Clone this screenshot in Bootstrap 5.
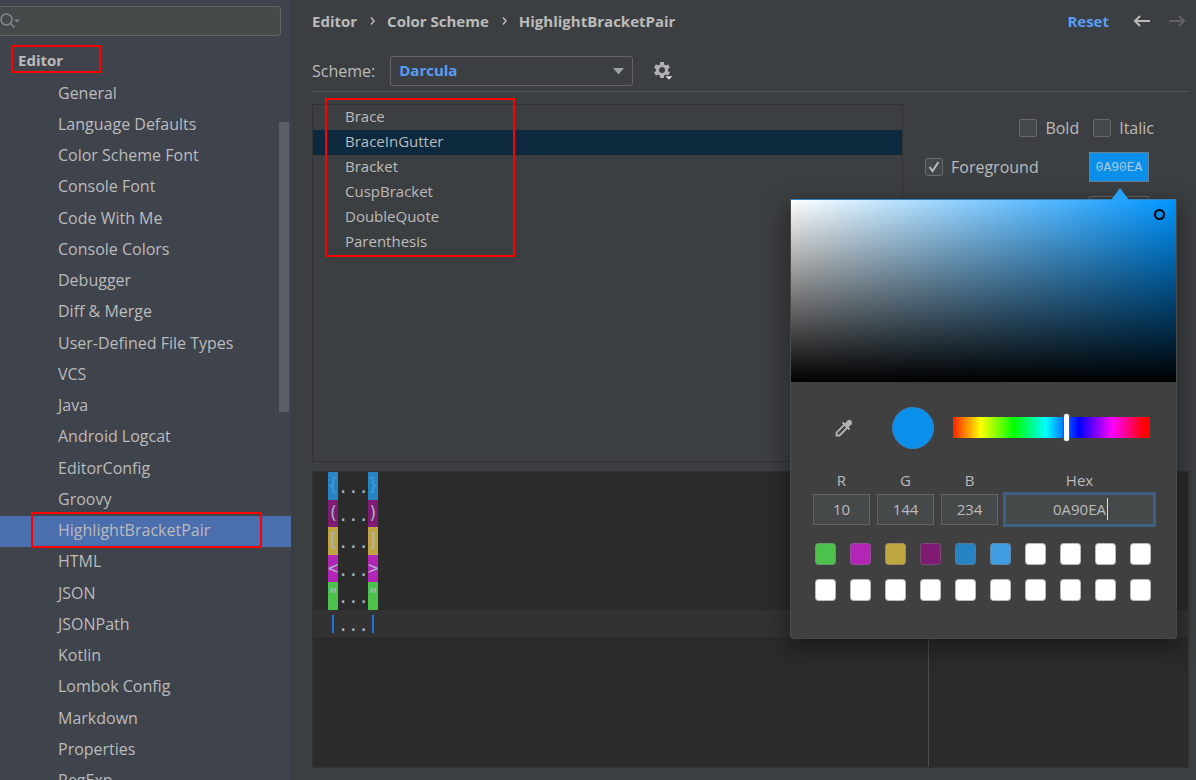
<!DOCTYPE html>
<html lang="en" data-bs-theme="dark">
<head>
<meta charset="utf-8">
<meta name="viewport" content="width=device-width, initial-scale=1">
<title>Settings</title>
<link href="https://cdn.jsdelivr.net/npm/bootstrap@5.3.0/dist/css/bootstrap.min.css" rel="stylesheet">
<style>
body{background:#3c3f41;color:#bbb;font:16px/24px "Open Sans","Noto Sans",sans-serif;height:100vh;overflow:hidden}
a{color:inherit;text-decoration:none}
svg{display:block}
/* settings tree */
.side{width:291px;background:#3f434c}
.search{margin-top:6px;width:281px;height:30px;background:#45494a;border:1px solid #646464;border-left:0;border-radius:0 4px 4px 0}
.search input{background:none;border:0;outline:0;color:#bbb;width:240px}
.group{margin:9px 0 6px 11px;width:90px;height:28px;line-height:26px;padding-left:5px;border:2px solid #f00;font-size:15px}
.tree li{height:31px;line-height:29px;position:relative}
.tree li:nth-child(4n){height:32px}
.tree a{display:block;height:31px;padding-left:58px}
.tree .on{background:#4b6eaf}
.thumb{position:absolute;left:279px;top:122px;width:10px;height:290px;background:#5b5e66}
.note{position:absolute;border:2px solid #f00;pointer-events:none}
.note-row{left:31px;top:-4px;width:231px;height:36px}
.note-list{left:12px;top:-7px;width:190px;height:159px}
/* header */
.main{padding:0 7px 12px 21px}
.crumbs{height:43px;padding-bottom:1px;font-size:15px}
.blue{color:#589df6}
.scheme{height:49px;border-bottom:1px solid #515456;padding:13px 0 5px}
.scheme select{width:243px;height:30px;background:none;border:1px solid #646464;border-radius:3px;color:#589df6;font-size:15px;font-weight:700;padding:0 0 2px 8px;appearance:none;line-height:24px}
.pick{position:relative;margin-left:15px}
.pick svg{position:absolute;right:9px;top:12px}
/* colour keys */
.keys{width:591px;height:358px;margin-top:12px;border:1px solid #323232;position:relative;font-size:15px}
.keys li{height:25px;line-height:22px;padding-left:32px}
.keys .on{background:#0d293e}
.attrs{padding:24px 0 0 22px}
.styles{padding-right:35px}
.styles label+.box{margin-left:14px}
.fg-row{margin-top:12px;padding-right:40px;height:30px}
.box{appearance:none;width:18px;height:18px;background:#43494a;border:1px solid #6b6b6b;border-radius:3px;margin:0}
.box:checked{background:#43494a url("data:image/svg+xml,%3Csvg xmlns='http://www.w3.org/2000/svg' viewBox='0 0 16 16'%3E%3Cpath d='M3.5 8l3 4 6-9' fill='none' stroke='%23bbb' stroke-width='2'/%3E%3C/svg%3E")}
.slot{height:30px}
.swatch{width:60px;height:30px;background:#0a90ea;border:1px solid #6b7f8e;color:#a9c8e0;font:13px/28px "Liberation Mono",monospace;padding:0;text-align:center;display:block}
.swatch-next{width:60px;height:20px;border:1px solid #646464;margin-top:14px}
/* sample */
.sample{margin-top:9px;background:#2b2b2b;border:1px solid #323232;position:relative;font:17px/34px "DejaVu Sans Mono",monospace;color:#a9b7c6}
.sample p{height:27px;line-height:26px;margin:0;padding-left:15px;display:flex}
.sample p:nth-child(odd){height:28px}
.sample span{width:30px;line-height:30px}
.sample b{width:10px;font-weight:400}
.sample .caret-row{background:#323232;height:27px}
.caret-row b{color:#0a90ea}
.c-brace{background:#2783c2;color:#409ce0}
.c-paren{background:#7f1b72}
.c-brack{background:#bfa642}
.c-cusp{background:#b225b7}
.c-quote{background:#4cc24c}
.margin-line{position:absolute;left:615px;top:0;bottom:0;width:1px;background:#4d4d4d}
/* colour chooser */
.popup{position:absolute;right:-28px;top:47px;width:387px;height:440px;background:#404040;border:1px solid #4a4a4a;border-top-color:#2e86c8;border-radius:0 0 4px 4px;box-shadow:0 8px 22px 4px rgba(0,0,0,.35);z-index:5}
.popup:before{content:"";position:absolute;left:320px;top:-12px;border:9px solid transparent;border-top:0;border-bottom:12px solid #25a0fb}
.field{height:182px;background:linear-gradient(to top,#000,transparent),linear-gradient(to right,#fff,#0095ff);position:relative}
.dot{position:absolute;right:11px;top:9px;width:11px;height:11px;border:2px solid #000;border-radius:50%}
.tools{padding:21px 26px 0 43px;height:70px}
.disc{width:42px;height:42px;border-radius:50%;background:#0a90ea;border:1px solid #2e86c8;margin-left:38px}
.hue{appearance:none;width:197px;height:21px;margin-left:19px;background:linear-gradient(to right,#f20,#ff0 14%,#0f0 31%,#0ff 47%,#00f 64%,#f0f 81%,#f00 97%)}
.hue::-webkit-slider-thumb{appearance:none;width:5px;height:27px;border-radius:2px;background:#fff;box-shadow:0 0 0 1px #555}
.nums{padding:16px 20px 0 22px;gap:7px;font-size:15px}
.nums label{display:flex;flex-direction:column;align-items:center;gap:2px;position:relative}
.nums label:last-child{margin-left:-2px}
.nums input{width:57px;height:31px;background:#45494a;border:1px solid #646464;color:#bbb;text-align:center;outline:0;padding:0 0 2px}
.nums .hex{width:153px;height:35px;margin:-2px 0;border:3px solid #3d6185}
.caret{position:absolute;left:104px;bottom:5px;width:1px;height:22px;background:#ddd}
.chips{padding:18px 25px 0 24px;display:grid;grid-template-columns:repeat(10,21px);justify-content:space-between;row-gap:14px}
.chips button{height:22px;border:1px solid rgba(120,120,120,.5);border-radius:4px;padding:0;background:#fff}
.chips .c-brace{background:#2783c2}
.chips .c-paren{background:#7f1b72}
.chips .c-brack{background:#bfa642}
.chips .c-cusp{background:#b225b7}
.chips .c-quote{background:#4cc24c}
.chips .c-sky{background:#409ce0}
</style>
</head>
<body class="d-flex">
<aside class="side position-relative overflow-hidden flex-shrink-0">
  <div class="search d-flex align-items-center">
    <svg width="20" height="18" viewBox="0 0 20 18" fill="none" stroke="#7d8b92" stroke-width="1.5"><circle cx="6.500" cy="7.500" r="5.500"/><path d="M10.500 11.500l4 4"/><path d="M14 7.500h6l-3 3z" fill="#7d8b92" stroke="none"/></svg>
    <input type="text" aria-label="Search settings">
  </div>
  <div class="group fw-bold">Editor</div>
  <ul class="tree list-unstyled m-0">
    <li><a href="#">General</a></li><li><a href="#">Language Defaults</a></li><li><a href="#">Color Scheme Font</a></li><li><a href="#">Console Font</a></li>
    <li><a href="#">Code With Me</a></li><li><a href="#">Console Colors</a></li><li><a href="#">Debugger</a></li><li><a href="#">Diff &amp; Merge</a></li>
    <li><a href="#">User-Defined File Types</a></li><li><a href="#">VCS</a></li><li><a href="#">Java</a></li><li><a href="#">Android Logcat</a></li>
    <li><a href="#">EditorConfig</a></li><li><a href="#">Groovy</a></li><li><a class="on" href="#">HighlightBracketPair</a><div class="note note-row"></div></li><li><a href="#">HTML</a></li>
    <li><a href="#">JSON</a></li><li><a href="#">JSONPath</a></li><li><a href="#">Kotlin</a></li><li><a href="#">Lombok Config</a></li>
    <li><a href="#">Markdown</a></li><li><a href="#">Properties</a></li><li><a href="#">RegExp</a></li>
  </ul>
  <div class="thumb"></div>
</aside>
<main class="main flex-grow-1 d-flex flex-column">
  <header class="crumbs d-flex align-items-center fw-bold">
    <span>Editor</span>
    <svg class="mx-2" width="14" height="12" viewBox="0 0 14 12" fill="none" stroke="#bbb" stroke-width="1.500"><path d="M6 2.500l3 3.500-3 3.500"/></svg>
    <span>Color Scheme</span>
    <svg class="mx-2" width="14" height="12" viewBox="0 0 14 12" fill="none" stroke="#bbb" stroke-width="1.500"><path d="M6 2.500l3 3.500-3 3.500"/></svg>
    <span>HighlightBracketPair</span>
    <a class="blue ms-auto" href="#">Reset</a>
    <button class="btn p-0 border-0 ms-4" aria-label="Back"><svg width="20" height="14" viewBox="0 0 20 14" fill="none" stroke="#bbb" stroke-width="2"><path d="M17 7H2M7 2L2 7l5 5"/></svg></button>
    <button class="btn p-0 border-0 ms-3" aria-label="Forward"><svg width="20" height="14" viewBox="0 0 20 14" fill="none" stroke="#5f6162" stroke-width="2"><path d="M0 7h15M10 2l5 5-5 5"/></svg></button>
  </header>
  <div class="scheme d-flex align-items-center">
    <label for="scheme">Scheme:</label>
    <div class="pick"><select id="scheme"><option>Darcula</option></select><svg width="11" height="7" viewBox="0 0 11 7"><path d="M0 0h11L5.500 6.500z" fill="#9da0a2"/></svg></div>
    <button class="btn p-0 border-0 ms-3" aria-label="Scheme actions"><svg width="28" height="20" viewBox="0 0 28 20"><g fill="none" stroke="#afb1b3"><circle cx="13" cy="9" r="4.500" stroke-width="3"/><path d="M13 1v3M13 14v3M6 5l3 1.700M17 11.300l3 1.700M6 13l3-1.700M17 6.700L20 5" stroke-width="4"/></g><path d="M16 15h8l-4 4z" fill="#ddd" stroke="#3c3f41" stroke-width=".6"/></svg></button>
  </div>
  <div class="d-flex">
    <div class="keys flex-shrink-0">
      <ul class="list-unstyled m-0"><li>Brace</li><li class="on">BraceInGutter</li><li>Bracket</li><li>CuspBracket</li><li>DoubleQuote</li><li>Parenthesis</li></ul>
      <div class="note note-list"></div>
    </div>
    <div class="attrs flex-grow-1">
      <div class="styles d-flex justify-content-end align-items-center">
        <input class="box me-2" type="checkbox" id="bold"><label for="bold">Bold</label>
        <input class="box me-2" type="checkbox" id="italic"><label for="italic">Italic</label>
      </div>
      <div class="fg-row d-flex align-items-center">
        <input class="box me-2" type="checkbox" id="fg" checked><label for="fg">Foreground</label>
        <div class="slot position-relative ms-auto">
          <input class="swatch" type="text" aria-label="Foreground color" value="0A90EA">
          <div class="swatch-next"></div>
          <section class="popup">
            <div class="field"><div class="dot"></div></div>
            <div class="tools d-flex align-items-center">
              <button class="btn p-0 border-0" aria-label="Pick from screen"><svg width="20" height="20" viewBox="0 0 20 20"><path d="M2.500 17.500v-3l8-8 3 3-8 8z" fill="none" stroke="#afb1b3" stroke-width="1.800"/><path d="M8.500 4.500l7 7" stroke="#afb1b3" stroke-width="2"/><path d="M10.500 6l3-3.500q2-1.500 3.800 0.200t0.200 3.800L14 9.500z" fill="#afb1b3"/></svg></button>
              <div class="disc"></div>
              <input class="hue" type="range" min="0" max="100" value="58" aria-label="Hue">
            </div>
            <div class="nums d-flex">
              <label>R<input type="text" value="10"></label><label>G<input type="text" value="144"></label><label>B<input type="text" value="234"></label><label>Hex<input class="hex" type="text" value="0A90EA"><i class="caret"></i></label>
            </div>
            <div class="chips">
              <button class="c-quote" aria-label="Recent 1"></button><button class="c-cusp" aria-label="Recent 2"></button><button class="c-brack" aria-label="Recent 3"></button><button class="c-paren" aria-label="Recent 4"></button><button class="c-brace" aria-label="Recent 5"></button><button class="c-sky" aria-label="Recent 6"></button><button aria-label="Recent 7"></button><button aria-label="Recent 8"></button><button aria-label="Recent 9"></button><button aria-label="Recent 10"></button>
              <button aria-label="Recent 11"></button><button aria-label="Recent 12"></button><button aria-label="Recent 13"></button><button aria-label="Recent 14"></button><button aria-label="Recent 15"></button><button aria-label="Recent 16"></button><button aria-label="Recent 17"></button><button aria-label="Recent 18"></button><button aria-label="Recent 19"></button><button aria-label="Recent 20"></button>
            </div>
          </section>
        </div>
      </div>
    </div>
  </div>
  <div class="sample flex-grow-1">
    <p><b class="c-brace">{</b><span>...</span><b class="c-brace">}</b></p>
    <p><b class="c-paren">(</b><span>...</span><b class="c-paren">)</b></p>
    <p><b class="c-brack">[</b><span>...</span><b class="c-brack">]</b></p>
    <p><b class="c-cusp">&lt;</b><span>...</span><b class="c-cusp">&gt;</b></p>
    <p><b class="c-quote">"</b><span>...</span><b class="c-quote">"</b></p>
    <p class="caret-row"><b>|</b><span>...</span><b>|</b></p>
    <div class="margin-line"></div>
  </div>
</main>
<script src="https://cdn.jsdelivr.net/npm/bootstrap@5.3.0/dist/js/bootstrap.bundle.min.js"></script>
</body>
</html>
